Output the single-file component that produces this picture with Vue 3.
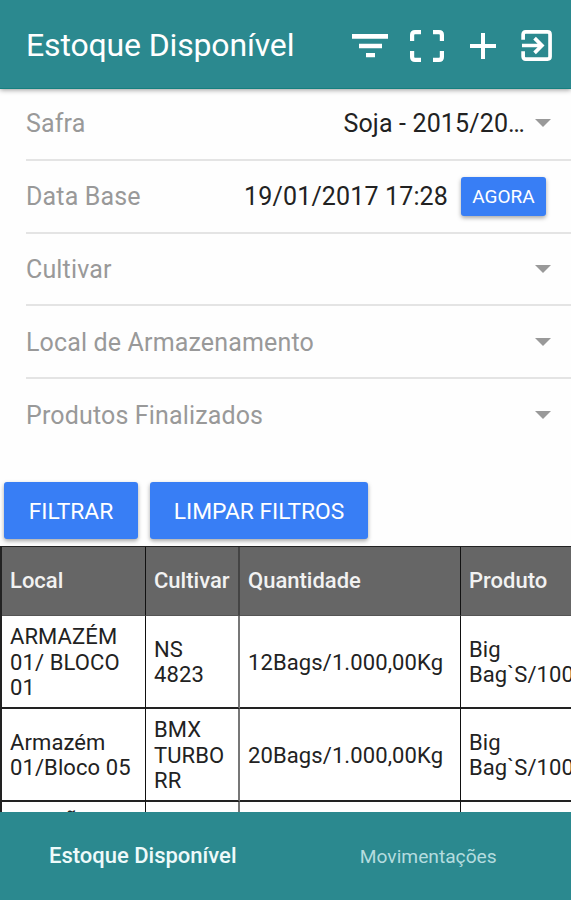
<template>
  <div class="page">
    <header class="toolbar">
      <h1 class="title">Estoque Disponível</h1>
      <button class="tool filter" aria-label="Filtros">
        <svg width="36" height="24" viewBox="0 0 36 24">
          <path d="M0 0h36v4.8H0zM7 9.8h23v4.4H7zM14 19h9v4.2h-9z" fill="#fff" />
        </svg>
      </button>
      <button class="tool expand" aria-label="Tela cheia">
        <svg width="34" height="32" viewBox="0 0 34 32" fill="none" stroke="#fff" stroke-width="4.2">
          <path d="M2.1 11V5q0-2.9 2.9-2.9h6M23 2.1h6q2.9 0 2.9 2.9v6M31.9 21v6q0 2.9-2.9 2.9h-6M11 29.9H5q-2.9 0-2.9-2.9v-6" />
        </svg>
      </button>
      <button class="tool add" aria-label="Adicionar">
        <svg width="26" height="26" viewBox="0 0 26 26">
          <path d="M11 0h4v11h11v4H15v11h-4V15H0v-4h11z" fill="#fff" />
        </svg>
      </button>
      <button class="tool exit" aria-label="Sair">
        <svg width="31" height="31" viewBox="0 0 32 32" fill="none" stroke="#fff" stroke-width="3.8">
          <path d="M2.2 10V4.6q0-2.6 2.6-2.6h22.6q2.6 0 2.6 2.6v22.8q0 2.6-2.6 2.6H4.8q-2.6 0-2.6-2.6V22" />
          <path d="M1 16h20M14 8.4l7.6 7.6-7.6 7.6" />
        </svg>
      </button>
    </header>

    <main class="content">
      <div class="filters">
        <div v-for="item in filters" :key="item.label" class="item">
          <span class="label">{{ item.label }}</span>
          <span class="value">{{ item.value }}</span>
          <button v-if="item.now" class="btn now">AGORA</button>
          <span v-else class="arrow"></span>
        </div>
      </div>

      <div class="actions">
        <button class="btn apply">FILTRAR</button>
        <button class="btn clear">LIMPAR FILTROS</button>
      </div>

      <table class="stock">
        <colgroup>
          <col class="col-local" />
          <col class="col-cultivar" />
          <col class="col-qtd" />
          <col class="col-produto" />
        </colgroup>
        <thead>
          <tr>
            <th v-for="name in columns" :key="name">{{ name }}</th>
          </tr>
        </thead>
        <tbody>
          <tr v-for="(row, index) in rows" :key="index">
            <td v-for="(cell, i) in row" :key="i">{{ cell }}</td>
          </tr>
        </tbody>
      </table>
    </main>

    <nav class="tabs">
      <a
        v-for="tab in tabs"
        :key="tab"
        class="tab"
        :class="{ active: tab === activeTab }"
        @click="activeTab = tab"
      >
        <span>{{ tab }}</span>
      </a>
    </nav>
  </div>
</template>

<script setup>
import { ref } from 'vue'

const filters = [
  { label: 'Safra', value: 'Soja - 2015/20…' },
  { label: 'Data Base', value: '19/01/2017 17:28', now: true },
  { label: 'Cultivar', value: '' },
  { label: 'Local de Armazenamento', value: '' },
  { label: 'Produtos Finalizados', value: '' }
]

const columns = ['Local', 'Cultivar', 'Quantidade', 'Produto']

const rows = [
  ['ARMAZÉM\n01/ BLOCO\n01', 'NS\n4823', '12Bags/1.000,00Kg', 'Big\nBag`S/1000'],
  ['Armazém\n01/Bloco 05', 'BMX\nTURBO\nRR', '20Bags/1.000,00Kg', 'Big\nBag`S/1000'],
  ['GALPÃO\n01/ BLOCO\n02', 'NS\n4823', '10Bags/1.000,00Kg', 'Big\nBag`S/1000']
]

const tabs = ['Estoque Disponível', 'Movimentações']
const activeTab = ref(tabs[0])
</script>

<style>
body {
  margin: 0;
  overflow: hidden;
}
</style>

<style scoped>
.page {
  display: flex;
  flex-direction: column;
  width: 100%;
  height: 900px;
  overflow: hidden;
  background: #fefefe;
  font-family: Roboto, sans-serif;
}

button {
  border: none;
  padding: 0;
  font-family: inherit;
  cursor: pointer;
}

/* toolbar */
.toolbar {
  position: relative;
  display: flex;
  align-items: center;
  flex: none;
  box-sizing: border-box;
  height: 89px;
  padding: 3px 19px 0 26px;
  background: #2b898f;
  border-bottom: 1px solid #15807f;
  box-shadow: 0 1px 5px rgba(0, 0, 0, 0.4);
}

.title {
  flex: 1;
  margin: 0;
  padding-bottom: 2px;
  font-size: 32px;
  font-weight: 400;
  line-height: 40px;
  letter-spacing: -0.15px;
  color: #fff;
  white-space: nowrap;
}

.tool {
  display: flex;
  background: none;
}

.expand {
  margin-left: 22px;
}

.add {
  margin-left: 26px;
}

.exit {
  margin-left: 25px;
}

/* content */
.content {
  flex: 1;
  min-height: 0;
  overflow: hidden;
}

.filters {
  padding-left: 26px;
  margin-top: -1px;
}

.item {
  display: flex;
  align-items: center;
  box-sizing: border-box;
  height: 72.8px;
  padding-right: 20px;
  border-bottom: 2px solid #e4e4e4;
}

.item:last-child {
  border-bottom-color: transparent;
}

.label,
.value {
  padding-top: 2px;
  font-size: 25px;
  line-height: 30px;
  letter-spacing: 0.15px;
  white-space: nowrap;
}

.label {
  color: #999;
}

.value {
  margin-left: auto;
  color: #222;
}

.arrow {
  margin-left: 10px;
  border-left: 8px solid transparent;
  border-right: 8px solid transparent;
  border-top: 8px solid #999;
}

.btn {
  border-radius: 3px;
  background: #387ef5;
  color: #fff;
  box-shadow: 0 2px 4px rgba(0, 0, 0, 0.35);
}

.now {
  width: 85px;
  height: 39px;
  margin: 0 5px 0 13px;
  font-size: 19px;
}

.actions {
  display: flex;
  gap: 12px;
  padding: 30px 4px 7px;
}

.actions .btn {
  height: 57px;
  padding-top: 2px;
  font-size: 22.8px;
}

.apply {
  width: 134px;
}

.clear {
  width: 218px;
}

/* table */
.stock {
  width: 640px;
  table-layout: fixed;
  border-spacing: 0;
  border-top: 1px solid #222;
  border-left: 2px solid #222;
}

.col-local {
  width: 144px;
}

.col-cultivar {
  width: 94px;
}

.col-qtd {
  width: 221px;
}

th,
td {
  box-sizing: border-box;
  padding: 2px 0 0 8px;
  border-right: 1px solid #111;
  text-align: left;
  font-size: 22px;
  white-space: pre;
}

th:nth-child(2),
td:nth-child(2) {
  border-right: 2px solid #777;
}

th:nth-child(2) {
  border-right-color: #444;
}

th {
  height: 69px;
  padding: 0 0 1px 8px;
  border-bottom: 1px solid #555;
  background: #666;
  color: #f2f2f2;
  font-weight: 500;
}

td {
  height: 93px;
  border-bottom: 2px solid #222;
  background: #fff;
  color: #222;
  line-height: 25.5px;
  letter-spacing: 0.1px;
}

/* tabs */
.tabs {
  display: flex;
  flex: none;
  height: 88px;
  background: #2b898f;
}

.tab {
  display: flex;
  flex: 1;
  align-items: center;
  justify-content: center;
  font-size: 19.2px;
  color: #b4dcdf;
  cursor: pointer;
}

.tab.active {
  padding-bottom: 2px;
  font-size: 22px;
  font-weight: 500;
  color: #eefafa;
}
</style>
